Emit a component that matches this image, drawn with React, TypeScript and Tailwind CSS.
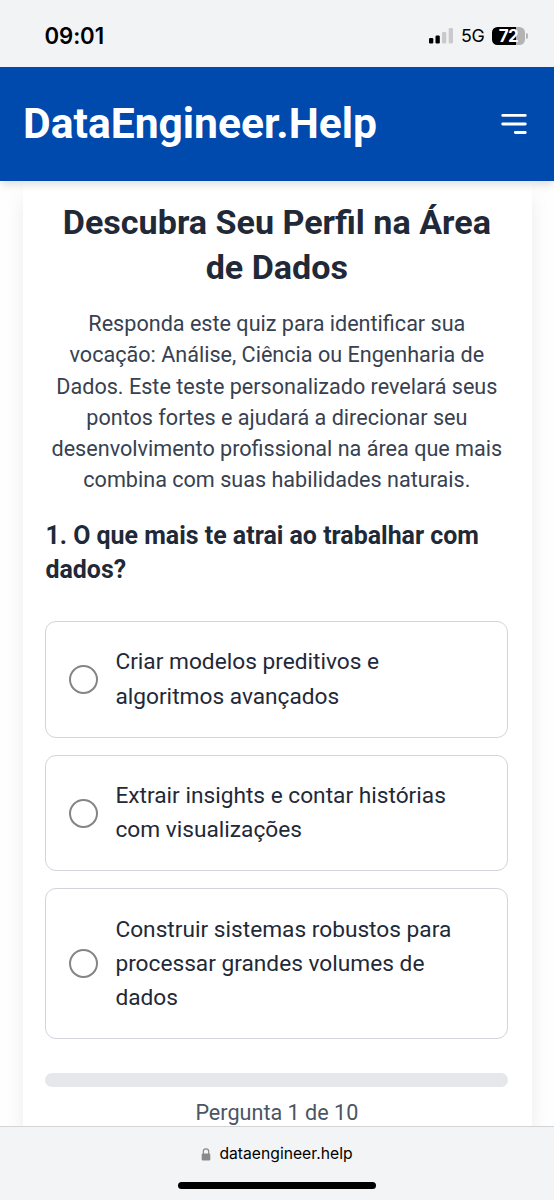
const options: string[][] = [
  ["Criar modelos preditivos e", "algoritmos avançados"],
  ["Extrair insights e contar histórias", "com visualizações"],
  ["Construir sistemas robustos para", "processar grandes volumes de", "dados"],
];

const intro = [
  "Responda este quiz para identificar sua",
  "vocação: Análise, Ciência ou Engenharia de",
  "Dados. Este teste personalizado revelará seus",
  "pontos fortes e ajudará a direcionar seu",
  "desenvolvimento profissional na área que mais",
  "combina com suas habilidades naturais.",
];

function StatusBar() {
  return (
    <div className="flex h-[67px] shrink-0 items-start justify-between bg-[#f2f3f5] pl-[44.5px] pr-[26px] pt-[21px] font-['Inter',sans-serif] text-black">
      <div className="text-[22.2px] font-semibold leading-[29px] tracking-[-0.1px]">09:01</div>
      <div className="flex items-center pt-[5px]">
        <svg className="mb-[2px]" width="25" height="17" viewBox="0 0 25 17">
          <rect x="0" y="11" width="4.3" height="5.5" rx="1.2" fill="#000" />
          <rect x="6.5" y="8.5" width="4.3" height="8" rx="1.2" fill="#000" />
          <rect x="13" y="5" width="4.3" height="11.5" rx="1.2" fill="#c9cacc" />
          <rect x="19.7" y="1" width="4.3" height="15.5" rx="1.2" fill="#c9cacc" />
        </svg>
        <div className="ml-[7px] w-[31px] text-[17.8px] font-normal leading-[20px] tracking-[-0.2px]">5G</div>
        <div className="flex h-[18px] w-[33px] items-center justify-center overflow-hidden rounded-[5.5px] bg-[linear-gradient(90deg,#000_72%,#b3b4b6_72%)] text-[17px] font-bold leading-[18px] tracking-[-0.5px] text-white">
          72
        </div>
        <div className="ml-[1px] h-[6px] w-[2px] rounded-r-full bg-[#b3b4b6]" />
      </div>
    </div>
  );
}

function Header() {
  return (
    <header className="relative z-10 flex h-[114px] shrink-0 items-center justify-between bg-[#004aad] pl-[23px] pr-[27px] shadow-[0_5px_8px_-1px_rgba(0,0,0,0.12)]">
      <div className="mb-[2px] whitespace-nowrap text-[42.6px] font-bold leading-[50px] text-white">DataEngineer.Help</div>
      <svg width="26" height="22" viewBox="0 0 26 22" fill="none" stroke="#fff" strokeWidth="2.8" strokeLinecap="round">
        <path d="M1.7 2.4H24.3M1.7 11H24.3M14.3 19.5H24.3" />
      </svg>
    </header>
  );
}

function Option({ lines }: { lines: string[] }) {
  return (
    <label className="flex items-center rounded-[11px] border-[1.4px] border-[#d1d5db] py-[23.2px] pl-[23px]">
      <span className="size-[29px] shrink-0 rounded-full border-2 border-[#858585] bg-white" />
      <span className="ml-[17px] whitespace-nowrap text-[22.7px] leading-[34.1px]">
        {lines.map((l) => (
          <span key={l} className="block">{l}</span>
        ))}
      </span>
    </label>
  );
}

function LockIcon() {
  return (
    <svg width="10" height="13" viewBox="0 0 10 13">
      <path d="M2.3 6V3.6a2.7 2.7 0 0 1 5.4 0V6" fill="none" stroke="#8a8a8d" strokeWidth="1.2" />
      <rect x="0.7" y="5.4" width="8.6" height="7.2" rx="1.3" fill="#8a8a8d" />
    </svg>
  );
}

export default function App() {
  return (
    <div className="flex h-[1200px] w-[554px] flex-col overflow-hidden bg-[#fefefe] font-['Roboto',sans-serif] text-[#1f2937]">
      <StatusBar />
      <Header />
      <main className="mx-[22.5px] h-[945px] shrink-0 overflow-visible bg-white pl-[22.9px] pr-[23.2px] pt-[19px] shadow-[0_14px_20px_-3px_rgba(0,0,0,0.1)]">
        <h1 className="whitespace-nowrap text-center text-[34.1px] font-bold leading-[45.4px]">
          Descubra Seu Perfil na Área
          <br />
          de Dados
        </h1>
        <p className="-mx-3 mt-[17.2px] whitespace-nowrap text-center text-[21.6px] leading-[31.25px] text-[#374151]">
          {intro.map((l) => (
            <span key={l} className="block">{l}</span>
          ))}
        </p>
        <h2 className="mt-[23.5px] whitespace-nowrap text-[24.95px] font-bold leading-[34px]">
          1. O que mais te atrai ao trabalhar com
          <br />
          dados?
        </h2>
        <div className="mt-[34.3px] flex flex-col gap-[17px]">
          {options.map((o) => (
            <Option key={o[0]} lines={o} />
          ))}
        </div>
        <div className="mt-[34.3px] h-[14px] rounded-full bg-[#e5e7eb]" />
        <div className="mt-[9.5px] text-center text-[21.6px] leading-[32px] text-[#4b5563]">Pergunta 1 de 10</div>
      </main>
      <footer className="relative z-10 flex h-[74px] shrink-0 flex-col items-center border-t border-[#d3d4d7] bg-[#f3f4f6] pt-[16px] font-['Inter',sans-serif]">
        <div className="flex items-center gap-[8px] text-[15.7px] leading-[22px] text-black">
          <LockIcon />
          <span>dataengineer.help</span>
        </div>
        <div className="mt-[17px] h-[7px] w-[198px] rounded-full bg-black" />
      </footer>
    </div>
  );
}
